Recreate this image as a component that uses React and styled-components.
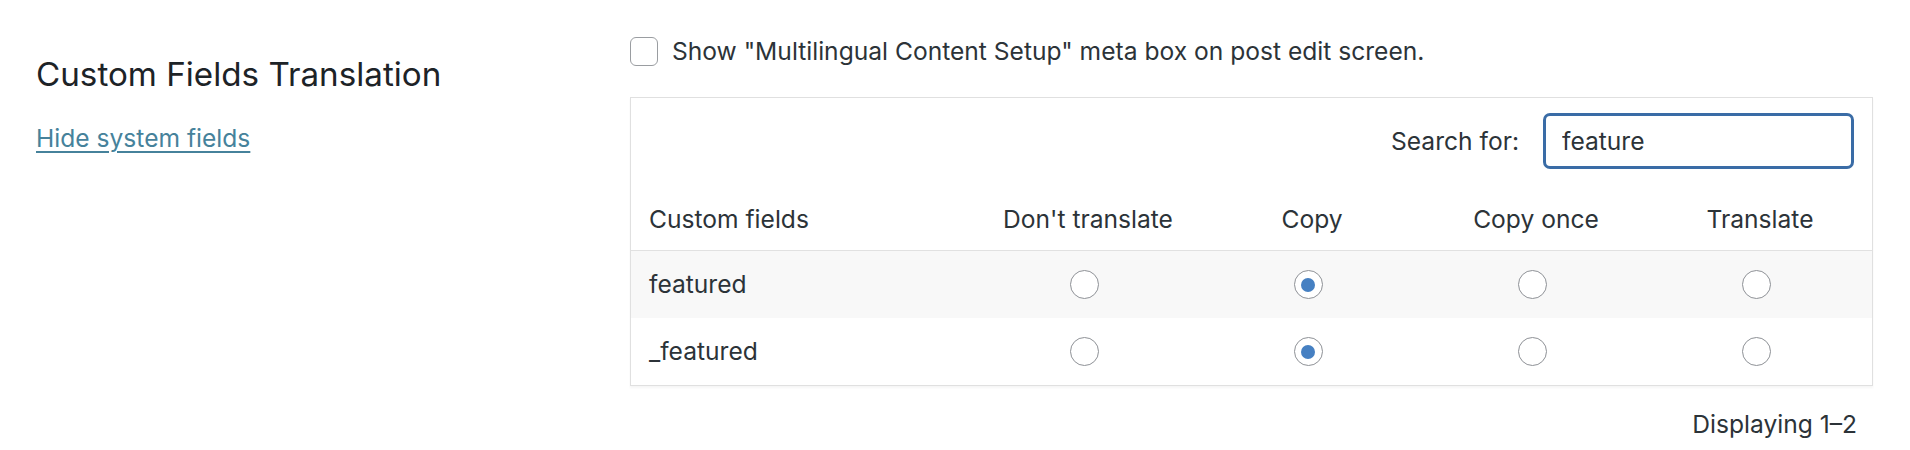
import React, { useState } from 'react';
import styled, { createGlobalStyle } from 'styled-components';

const GlobalStyle = createGlobalStyle`
  html, body {
    margin: 0;
    padding: 0;
    background: #fff;
  }
  body {
    font-family: Inter, "Noto Sans", "Liberation Sans", sans-serif;
    color: #2c3338;
  }
`;

const fields = [
  { name: 'featured', mode: 'copy' },
  { name: '_featured', mode: 'copy' },
];

const modes = [
  { key: 'ignore', label: "Don't translate" },
  { key: 'copy', label: 'Copy' },
  { key: 'copy-once', label: 'Copy once' },
  { key: 'translate', label: 'Translate' },
];

const App = () => {
  const [values, setValues] = useState(
    Object.fromEntries(fields.map((f) => [f.name, f.mode]))
  );
  const [showBox, setShowBox] = useState(false);
  const [query, setQuery] = useState('feature');

  return (
    <Page>
      <GlobalStyle />
      <SideColumn>
        <Heading>Custom Fields Translation</Heading>
        <ToggleLink href="#">Hide system fields</ToggleLink>
      </SideColumn>

      <MainColumn>
        <CheckRow>
          <Checkbox
            type="checkbox"
            checked={showBox}
            onChange={() => setShowBox(!showBox)}
          />
          Show "Multilingual Content Setup" meta box on post edit screen.
        </CheckRow>

        <Card>
          <SearchBar>
            <SearchLabel>Search for:</SearchLabel>
            <SearchInput value={query} onChange={(e) => setQuery(e.target.value)} />
          </SearchBar>

          <HeadRow>
            <HeadCell $align="left">Custom fields</HeadCell>
            {modes.map((m) => (
              <HeadCell key={m.key}>{m.label}</HeadCell>
            ))}
          </HeadRow>

          {fields.map((f, i) => (
            <FieldRow key={f.name} $striped={i % 2 === 0}>
              <FieldName>{f.name}</FieldName>
              {modes.map((m) => (
                <RadioCell key={m.key}>
                  <Radio
                    type="radio"
                    name={f.name}
                    checked={values[f.name] === m.key}
                    onChange={() => setValues({ ...values, [f.name]: m.key })}
                  />
                </RadioCell>
              ))}
            </FieldRow>
          ))}
        </Card>

        <Pagination>Displaying 1–2</Pagination>
      </MainColumn>
    </Page>
  );
};

const Page = styled.div`
  box-sizing: border-box;
  display: flex;
  padding-left: 36px;
  width: 1873px;
  font-size: 24.6px;
  line-height: 35px;
`;

const SideColumn = styled.div`
  width: 594px;
  flex-shrink: 0;
  padding-top: 54px;
  display: flex;
  flex-direction: column;
  align-items: flex-start;
`;

const Heading = styled.h2`
  margin: 0;
  font-size: 33.2px;
  line-height: 40px;
  font-weight: 400;
  color: #1d2327;
`;

const ToggleLink = styled.a`
  margin-top: 27px;
  color: #46829b;
  text-decoration: underline;
  text-underline-offset: 4px;
  text-decoration-thickness: 1.5px;
`;

const MainColumn = styled.div`
  flex: 1;
  padding-top: 36px;
  display: flex;
  flex-direction: column;
`;

const CheckRow = styled.label`
  display: flex;
  align-items: center;
  gap: 14px;
  height: 30px;
  color: #2c3338;
`;

const Checkbox = styled.input`
  appearance: none;
  margin: 0;
  width: 28px;
  height: 29px;
  border: 1.5px solid #9a9da1;
  border-radius: 6px;
  background: #fff;
  flex-shrink: 0;
`;

const Card = styled.div`
  margin-top: 31px;
  border: 1px solid #e0e0e0;
  box-shadow: 0 2px 2px rgba(0, 0, 0, 0.04);
  background: #fff;
`;

const SearchBar = styled.div`
  display: flex;
  justify-content: flex-end;
  align-items: center;
  gap: 24px;
  padding: 15px 18px 19px;
`;

const SearchLabel = styled.span`
  color: #2c3338;
`;

const SearchInput = styled.input`
  box-sizing: border-box;
  width: 311px;
  height: 56px;
  margin: 0;
  padding: 0 16px;
  border: 3px solid #3a6ca6;
  border-radius: 7px;
  font: inherit;
  color: #2c3338;
  outline: none;
`;

const grid = `
  display: grid;
  grid-template-columns: 1fr repeat(4, 224px) 4px;
  align-items: center;
`;

const HeadRow = styled.div`
  ${grid}
  height: 62px;
  border-bottom: 1px solid #e1e1e1;
`;

const HeadCell = styled.div`
  text-align: ${(p) => (p.$align === 'left' ? 'left' : 'center')};
  padding-left: ${(p) => (p.$align === 'left' ? '18px' : '8px')};
  color: #2c3338;
`;

const FieldRow = styled.div`
  ${grid}
  height: 67px;
  background: ${(p) => (p.$striped ? '#f8f8f8' : '#fff')};
`;

const FieldName = styled.div`
  padding-left: 18px;
  color: #2c3338;
`;

const RadioCell = styled.div`
  display: flex;
  justify-content: center;
`;

const Radio = styled.input`
  appearance: none;
  margin: 0;
  width: 29px;
  height: 29px;
  border-radius: 50%;
  border: 1.5px solid #8e9196;
  background: #fff;
  display: grid;
  place-items: center;

  &:checked::before {
    content: '';
    width: 14px;
    height: 14px;
    border-radius: 50%;
    background: #4680c2;
  }
`;

const Pagination = styled.div`
  margin-top: 21px;
  text-align: right;
  padding-right: 16px;
  color: #2c3338;
`;

export default App;
